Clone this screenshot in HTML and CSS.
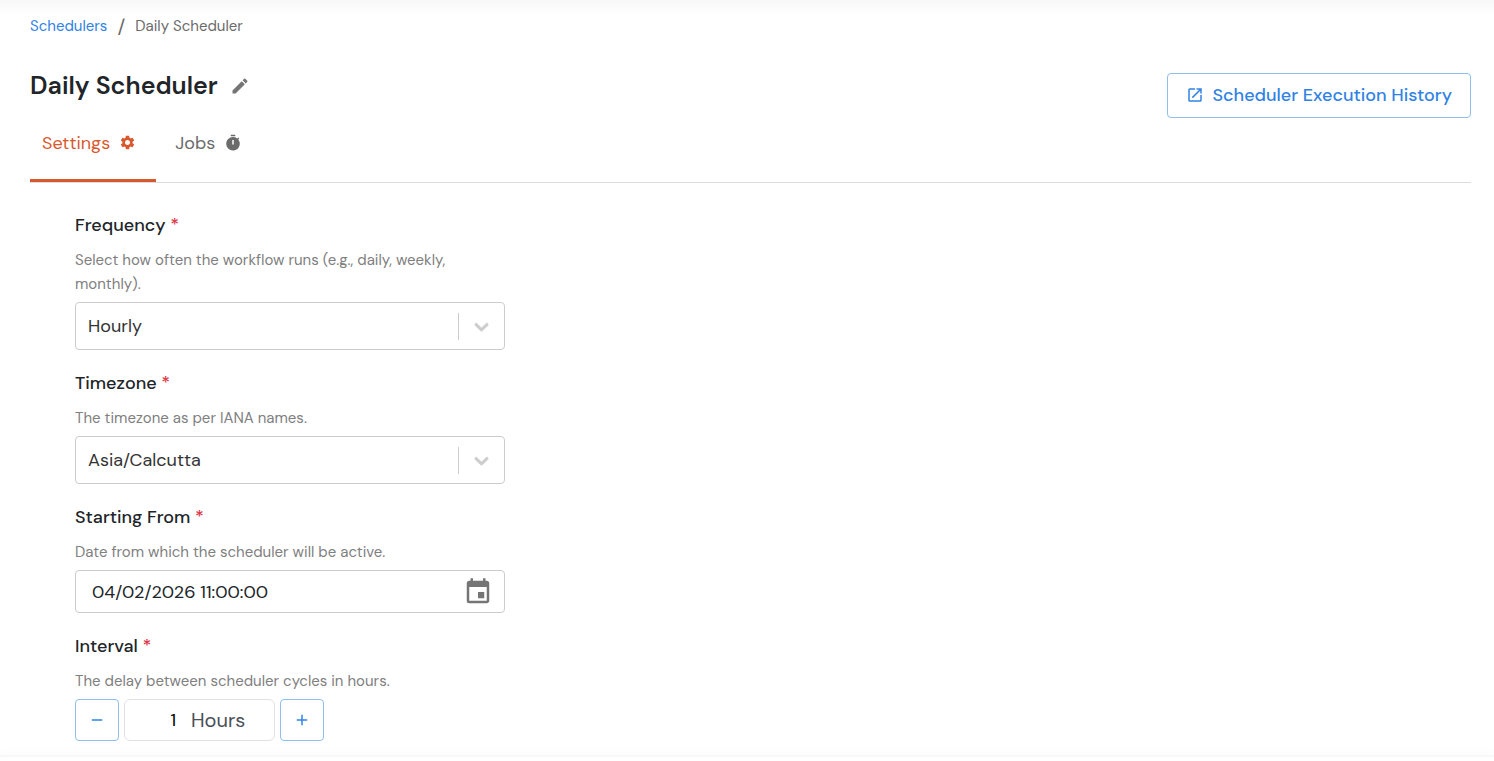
FILE: index.html
```html
<!DOCTYPE html>
<html lang="en">

<head>
  <meta charset="UTF-8">
  <title>Daily Scheduler</title>
  <meta name="viewport" content="width=device-width,initial-scale=1.0">
  <link rel="stylesheet" href="styles.css">
</head>

<body>

  <main class="page">
    <nav class="breadcrumb" aria-label="Breadcrumb">
      <a href="#schedulers">Schedulers</a>
      <span class="slash">/</span>
      <span>Daily Scheduler</span>
    </nav>

    <header class="page-header">
      <div class="title">
        <h1>Daily Scheduler</h1>
        <button type="button" class="icon-button" aria-label="Edit name">
          <svg width="20" height="20" viewBox="0 0 24 24" fill="currentColor">
            <path d="M3 17.25V21h3.75L17.81 9.94l-3.75-3.75L3 17.25zM20.71 7.04a1 1 0 0 0 0-1.41l-2.34-2.34a1 1 0 0 0-1.41 0l-1.83 1.83 3.75 3.75 1.83-1.83z" />
          </svg>
        </button>
      </div>
      <a class="history" href="#history">
        <svg width="18" height="18" viewBox="0 0 24 24" fill="currentColor">
          <path d="M19 19H5V5h7V3H5a2 2 0 0 0-2 2v14a2 2 0 0 0 2 2h14c1.100 0 2-.9 2-2v-7h-2v7zM14 3v2h3.590l-9.830 9.830 1.410 1.410L19 6.410V10h2V3h-7z" />
        </svg>
        Scheduler Execution History
      </a>
    </header>

    <nav class="tabs" aria-label="Scheduler sections">
      <a class="tab active" href="#settings">
        Settings
        <svg width="17" height="17" viewBox="0 0 24 24" fill="currentColor">
          <path d="M19.140 12.940c.04-.3.060-.61.060-.94 0-.32-.02-.64-.07-.94l2.030-1.580a.49.49 0 0 0 .12-.61l-1.920-3.320a.488.488 0 0 0-.59-.22l-2.390.96c-.5-.38-1.030-.7-1.620-.94l-.36-2.540a.484.484 0 0 0-.48-.41h-3.840c-.24 0-.43.170-.47.410l-.36 2.540c-.59.240-1.130.570-1.620.940l-2.390-.96c-.22-.08-.47 0-.59.220L2.740 8.870c-.12.210-.08.470.12.610l2.030 1.580c-.05.300-.09.630-.09.940s.02.640.070.940l-2.030 1.580a.49.49 0 0 0-.12.610l1.920 3.320c.12.220.370.290.590.220l2.390-.96c.5.380 1.030.7 1.620.940l.36 2.540c.05.240.240.410.480.410h3.840c.24 0 .44-.17.470-.41l.36-2.540c.59-.24 1.130-.56 1.620-.94l2.390.960c.22.080.470 0 .59-.22l1.920-3.320c.12-.22.070-.47-.12-.61l-2.010-1.580zM12 15.600c-1.980 0-3.600-1.620-3.600-3.600s1.620-3.600 3.600-3.600 3.600 1.620 3.600 3.600-1.620 3.600-3.600 3.600z" />
        </svg>
      </a>
      <a class="tab" href="#jobs">
        Jobs
        <svg width="18" height="18" viewBox="0 0 24 24" fill="currentColor">
          <path d="M9 1h6v2H9zM19.030 7.390l1.420-1.420c-.43-.51-.9-.99-1.410-1.410l-1.420 1.420A8.962 8.962 0 0 0 12 4c-4.970 0-9 4.030-9 9s4.020 9 9 9a8.994 8.994 0 0 0 7.030-14.610zM13 14h-2V8h2v6z" />
        </svg>
      </a>
    </nav>

    <form class="settings">
      <div class="field">
        <label for="frequency">Frequency <span class="required">*</span></label>
        <p>Select how often the workflow runs (e.g., daily, weekly, monthly).</p>
        <div class="select">
          <select id="frequency">
            <option>Hourly</option>
          </select>
          <span class="indicator">
            <svg width="23" height="23" viewBox="0 0 20 20" fill="currentColor" stroke="currentColor" stroke-width=".6">
              <path d="M4.516 7.548c.436-.446 1.043-.481 1.576 0L10 11.295l3.908-3.747c.533-.481 1.141-.446 1.574 0 .436.445.408 1.197 0 1.615l-4.695 4.502a1.095 1.095 0 0 1-1.576 0L4.516 9.163c-.409-.418-.436-1.170 0-1.615z" />
            </svg>
          </span>
        </div>
      </div>

      <div class="field">
        <label for="timezone">Timezone <span class="required">*</span></label>
        <p>The timezone as per IANA names.</p>
        <div class="select">
          <select id="timezone">
            <option>Asia/Calcutta</option>
          </select>
          <span class="indicator">
            <svg width="23" height="23" viewBox="0 0 20 20" fill="currentColor" stroke="currentColor" stroke-width=".6">
              <path d="M4.516 7.548c.436-.446 1.043-.481 1.576 0L10 11.295l3.908-3.747c.533-.481 1.141-.446 1.574 0 .436.445.408 1.197 0 1.615l-4.695 4.502a1.095 1.095 0 0 1-1.576 0L4.516 9.163c-.409-.418-.436-1.170 0-1.615z" />
            </svg>
          </span>
        </div>
      </div>

      <div class="field">
        <label for="start">Starting From <span class="required">*</span></label>
        <p>Date from which the scheduler will be active.</p>
        <div class="date">
          <input type="text" id="start" value="04/02/2026 11:00:00">
          <button type="button" class="icon-button" aria-label="Choose date">
            <svg width="30" height="30" viewBox="0 0 24 24" fill="currentColor">
              <path d="M17 12h-5v5h5v-5zM16 1v2H8V1H6v2H5c-1.110 0-1.990.9-1.990 2L3 19a2 2 0 0 0 2 2h14c1.100 0 2-.9 2-2V5c0-1.100-.9-2-2-2h-1V1h-2zm3 18H5V8h14v11z" />
            </svg>
          </button>
        </div>
      </div>

      <div class="field">
        <label for="interval">Interval <span class="required">*</span></label>
        <p>The delay between scheduler cycles in hours.</p>
        <div class="stepper">
          <button type="button" class="step" id="minus" aria-label="Decrease">
            <svg width="18" height="18" viewBox="0 0 24 24" fill="currentColor">
              <path d="M19 13H5v-2h14v2z" />
            </svg>
          </button>
          <div class="amount">
            <input type="text" id="interval" value="1" inputmode="numeric">
            <span>Hours</span>
          </div>
          <button type="button" class="step" id="plus" aria-label="Increase">
            <svg width="18" height="18" viewBox="0 0 24 24" fill="currentColor">
              <path d="M19 13h-6v6h-2v-6H5v-2h6V5h2v6h6v2z" />
            </svg>
          </button>
        </div>
      </div>
    </form>
  </main>

  <footer class="bottom-bar"></footer>

  <script>
    const interval = document.querySelector('#interval');

    function step(amount) {
      interval.value = Math.max(1, (parseInt(interval.value) || 1) + amount);
    }

    document.querySelector('#minus').addEventListener('click', () => step(-1));
    document.querySelector('#plus').addEventListener('click', () => step(1));
  </script>

</body>

</html>
```
FILE: styles.css
```css
* {
  box-sizing: border-box;
}

body {
  margin: 0;
  min-height: 100vh;
  display: flex;
  flex-direction: column;
  background: #fff;
  color: #212529;
  font-family: "DM Sans", Inter, sans-serif;
  font-size: 18px;
  line-height: 24px;
}

svg {
  display: block;
  flex: none;
}

a {
  color: #3182e4;
  text-decoration: none;
}

input,
select,
button {
  font: inherit;
  color: inherit;
}

.page {
  flex: 1;
  padding: 14px 23px 14px 30px;
  background: linear-gradient(#f7f7f7, #fff 14px);
}

.breadcrumb {
  display: flex;
  align-items: center;
  gap: 10px;
  color: #6b6b6b;
  font-size: 15px;
}

.breadcrumb .slash {
  font-size: 20px;
}

.page-header {
  display: flex;
  justify-content: space-between;
  align-items: flex-start;
  padding-top: 35px;
}

.title {
  display: flex;
  align-items: center;
  gap: 12px;
}

h1 {
  margin: 0;
  font-size: 25px;
  font-weight: 600;
  line-height: 26px;
}

.icon-button {
  padding: 0;
  border: 0;
  background: none;
  color: #757575;
  cursor: pointer;
}

.history {
  display: flex;
  align-items: center;
  gap: 9px;
  height: 45px;
  padding: 0 18px 1px;
  border: 1px solid #90bdea;
  border-radius: 4px;
  font-weight: 500;
}

.tabs {
  display: flex;
  gap: 7px;
  border-bottom: 1px solid #dcdcdc;
}

.tab {
  display: flex;
  align-items: center;
  gap: 9px;
  height: 64px;
  padding: 0 20px 12px 12px;
  border-bottom: 3px solid transparent;
  color: #6b6b6b;
}

.tab.active {
  color: #d9592f;
  border-color: #d9592f;
}

.settings {
  display: flex;
  flex-direction: column;
  gap: 21px;
  max-width: 475px;
  padding: 30px 0 0 45px;
}

.field label {
  display: block;
  font-weight: 500;
}

.required {
  color: #dc3545;
}

.field p {
  margin: 11px 0 6px;
  padding-right: 40px;
  color: #808080;
  font-size: 15px;
}

.select {
  position: relative;
}

.select select {
  display: block;
  width: 100%;
  height: 48px;
  padding: 0 60px 0 12px;
  border: 1px solid #ccc;
  border-radius: 4px;
  background: #fff;
  color: #333;
  appearance: none;
}

.indicator {
  position: absolute;
  top: 11px;
  right: 0;
  display: flex;
  align-items: center;
  height: 27px;
  padding: 0 12px 0 11px;
  border-left: 1px solid #ccc;
  color: #ccc;
  pointer-events: none;
}

.date {
  display: flex;
  align-items: center;
  height: 43px;
  padding: 0 11px 0 16px;
  border: 1px solid #ccc;
  border-radius: 4px;
}

.date input {
  flex: 1;
  min-width: 0;
  padding: 0;
  border: 0;
  outline: 0;
  background: none;
}

.stepper {
  display: flex;
  gap: 5px;
}

.step {
  display: flex;
  align-items: center;
  justify-content: center;
  width: 44px;
  height: 42px;
  padding: 0;
  border: 1px solid #90bdea;
  border-radius: 4px;
  background: #fff;
  color: #3182e4;
  cursor: pointer;
}

.amount {
  display: flex;
  align-items: center;
  gap: 15px;
  width: 151px;
  padding-left: 11px;
  border: 1px solid #dee2e6;
  border-radius: 6px;
  color: #495057;
  font-size: 20px;
}

.amount input {
  width: 40px;
  padding: 0;
  border: 0;
  outline: 0;
  background: none;
  color: #000;
  font-size: 18px;
  text-align: right;
}

.bottom-bar {
  height: 6px;
  border-top: 2px solid #f8f8f8;
  background: #fff;
  box-shadow: 0 -3px 8px rgba(0, 0, 0, 0.02);
}
```
